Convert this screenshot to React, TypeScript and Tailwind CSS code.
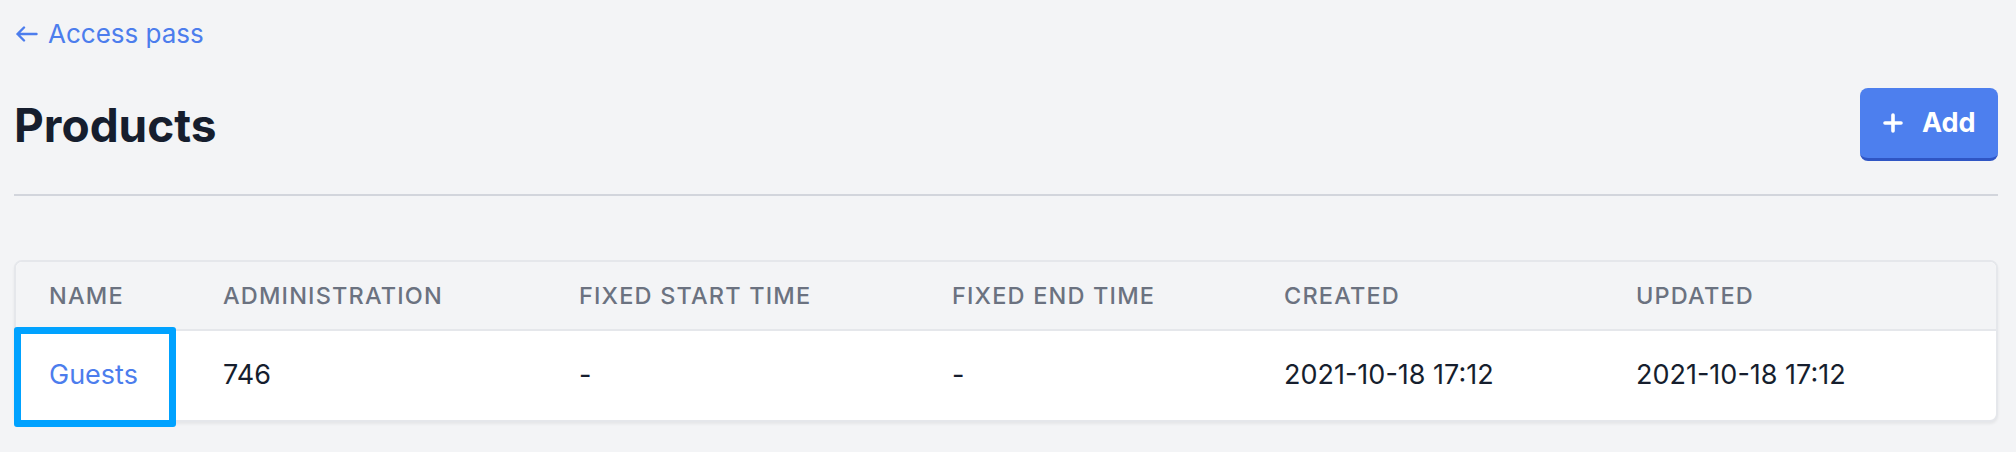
import React from 'react';

const COLUMNS = [
  { label: 'Name', width: 'w-[174px]' },
  { label: 'Administration', width: 'w-[356px]' },
  { label: 'Fixed start time', width: 'w-[373px]' },
  { label: 'Fixed end time', width: 'w-[332px]' },
  { label: 'Created', width: 'w-[352px]' },
  { label: 'Updated', width: '' },
];

const ROWS = [
  {
    id: 'p1',
    name: 'Guests',
    administration: '746',
    start: '-',
    end: '-',
    created: '2021-10-18 17:12',
    updated: '2021-10-18 17:12',
  },
];

function ArrowLeft() {
  return (
    <svg width="22" height="16" viewBox="0 0 22 16" fill="none" stroke="currentColor" strokeWidth="2.4" strokeLinecap="round" strokeLinejoin="round">
      <path d="M8 1.5 L1.5 8 L8 14.5 M1.5 8 H20.5" />
    </svg>
  );
}

function PlusIcon() {
  return (
    <svg width="20" height="20" viewBox="0 0 20 20" fill="none" stroke="currentColor" strokeWidth="3.6" strokeLinecap="round">
      <path d="M10 2 V18 M2 10 H18" />
    </svg>
  );
}

export default function App() {
  return (
    <div
      className="min-h-[452px] bg-[#f3f4f6] pl-[14px] pr-[18px] pt-[16px]"
      style={{ fontFamily: 'Inter, "Noto Sans", sans-serif' }}
    >
      {/* back link */}
      <a href="#" className="flex items-center gap-[10px] text-[26px] leading-[36px] text-[#4c7ded]">
        <span className="pl-[2px]"><ArrowLeft /></span>
        <span>Access pass</span>
      </a>

      {/* header */}
      <div className="mt-[36px] flex items-center justify-between">
        <h1 className="text-[46px] font-bold leading-[56px] text-[#161e2e]">Products</h1>
        <button className="flex h-[73px] w-[138px] items-center gap-[19px] rounded-[8px] border-b-[3px] border-[#2f55c4] bg-[#4d7fee] pl-[23px] text-[27px] font-bold text-white">
          <PlusIcon />
          <span>Add</span>
        </button>
      </div>

      <div className="mt-[33px] h-[2px] bg-[#d2d5dc]" />

      {/* table */}
      <div className="mt-[64px] rounded-[8px] border-2 border-[#e5e7eb] bg-white shadow-[0_2px_3px_rgba(0,0,0,0.06)]">
        <table className="w-full table-fixed border-collapse">
          <colgroup>
            {COLUMNS.map((c) => (
              <col key={c.label} className={c.width} />
            ))}
          </colgroup>
          <thead>
            <tr className="h-[68px] border-b-2 border-[#e5e7eb]">
              {COLUMNS.map((c, i) => (
                <th
                  key={c.label}
                  className={`bg-[#f3f4f6] pl-[33px] text-left text-[23.5px] font-medium uppercase tracking-[0.05em] text-[#6b7280] ${
                    i === 0 ? 'rounded-tl-[6px]' : ''
                  } ${i === COLUMNS.length - 1 ? 'rounded-tr-[6px]' : ''}`}
                >
                  {c.label}
                </th>
              ))}
            </tr>
          </thead>
          <tbody>
            {ROWS.map((r) => (
              <tr key={r.id} className="h-[90px] text-[27px] text-[#161e2e]">
                <td className="relative pl-[33px]">
                  <a href="#" className="text-[#4c7ded]">{r.name}</a>
                  {/* highlight */}
                  <span className="pointer-events-none absolute left-[-2px] right-[14px] top-[-4px] bottom-[-7px] rounded-[3px] border-[7px] border-[#00a2ff]" />
                </td>
                <td className="pl-[33px]">{r.administration}</td>
                <td className="pl-[33px]">{r.start}</td>
                <td className="pl-[33px]">{r.end}</td>
                <td className="pl-[33px]">{r.created}</td>
                <td className="pl-[33px]">{r.updated}</td>
              </tr>
            ))}
          </tbody>
        </table>
      </div>
    </div>
  );
}
